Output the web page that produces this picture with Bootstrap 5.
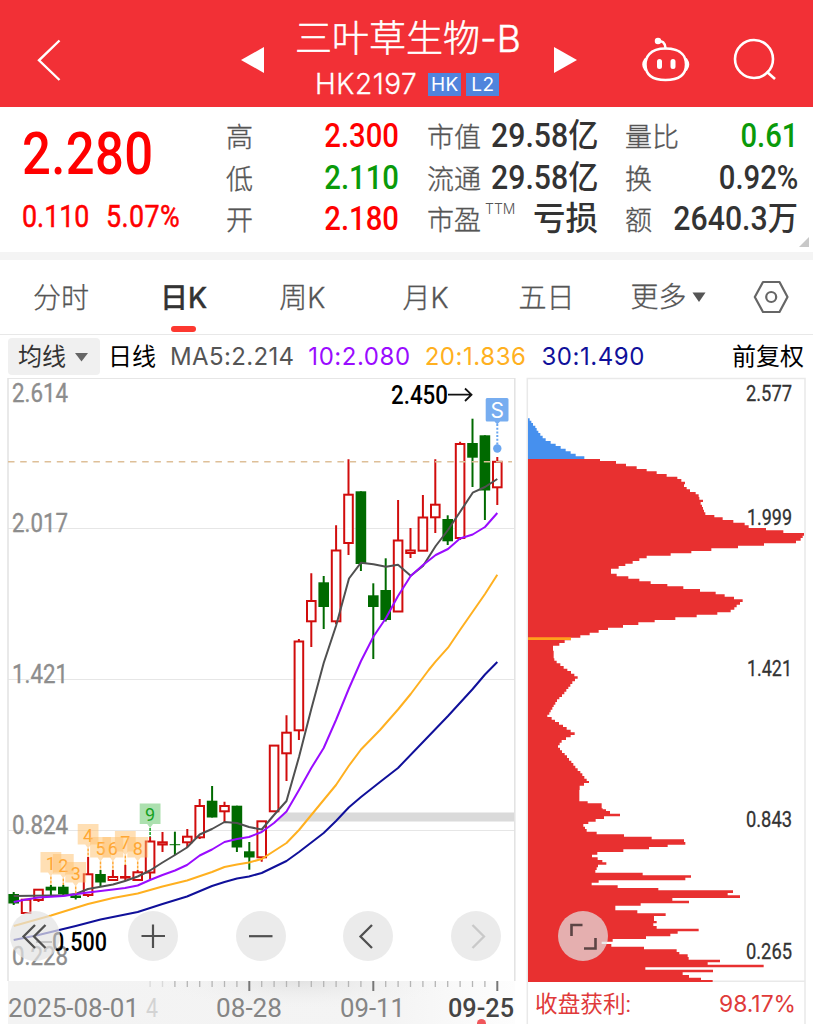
<!DOCTYPE html>
<html lang="zh-CN">
<head>
<meta charset="utf-8">
<meta name="viewport" content="width=device-width, initial-scale=1">
<title>三叶草生物-B</title>
<link href="https://cdn.jsdelivr.net/npm/bootstrap@5.3.0/dist/css/bootstrap.min.css" rel="stylesheet">
<style>
body{font-family:Inter,"Noto Sans CJK SC",sans-serif;color:#333;background:#fff;width:813px;height:1024px;overflow:hidden}
.topbar{height:107px;background:#f23036;color:#fff;padding:12px 37px 0 36px}
.topbar svg,.tabs svg{display:block;flex:none}
.stock{width:226px;margin:0 32px 0 30px;padding-top:4px}
.stock-name{font-size:37px;line-height:46px;font-weight:300;white-space:nowrap;-webkit-text-stroke:.5px #fff}
.stock-code{font-size:28px;line-height:44px;height:44px;font-weight:300;letter-spacing:.55px;padding-left:20px;-webkit-text-stroke:.3px #fff}
.tag{background:#5084dc;width:33px;height:23px;font-size:19px;line-height:23px;font-weight:400;text-align:center;letter-spacing:.3px;-webkit-text-stroke:0}
.quote{height:145px;padding:9px 16px 0 22px}
.num{font-family:Roboto,"Noto Sans CJK SC",sans-serif;font-weight:500;display:inline-block;white-space:nowrap}
.price{font-size:59px;line-height:71px;transform:scaleX(.86);transform-origin:left;color:#f00;letter-spacing:.5px}
.delta{font-size:30.5px;line-height:44px;transform:scaleX(.88);transform-origin:left;color:#f00;font-weight:400;-webkit-text-stroke:.5px #f00}
.main-price{width:204px;padding-top:2px}
.stat{height:41.7px;line-height:42px}
.stat .k{font-size:27px;font-weight:300;color:#555;position:relative;top:1px;-webkit-text-stroke:.35px #555}
.stat .k sup{font-size:14px;position:absolute;left:58px;top:-12px;line-height:42px;-webkit-text-stroke:0}
.stat .num{font-size:32.5px;transform:scaleX(.9);transform-origin:right;line-height:40px}
.stat .num.cj{transform:scaleX(.93)}
.stat .num.ks{transform:none}
.up{color:#f00}.down{color:#0a9a0a}
.c1{width:173px;margin-right:28px}.c2{width:171px;margin-right:27px}.c3{width:173px;margin-right:-1px}
.corner{right:4px;bottom:5px;width:10px;height:10px;background:#c8c8c8;clip-path:polygon(100% 0,100% 100%,0 100%)}
.band{height:8px;background:#f4f4f4}
.tabs{height:75px;border-bottom:1px solid #e8e8e8;font-size:28px;line-height:76px;font-weight:300;color:#555;padding:0 24px 0 33px;-webkit-text-stroke:.3px}
.tabs>span{white-space:nowrap}
.tabs .on{font-weight:500;color:#333}
.tabs .on::after{content:"";position:absolute;left:50%;margin-left:-13px;bottom:2px;width:25px;height:6px;border-radius:3px;background:#fd3830}
.mabar{height:42px;padding:1px 9px 0 8px;font-size:24px;line-height:42px;font-weight:400;white-space:nowrap}
.mabar .ma{letter-spacing:.55px}
.pick{background:#f0f0f0;border-radius:4px;height:37px;width:92px;line-height:36px;padding-left:10px;margin-right:8px;color:#333}
.charts{height:647px}
.charts svg{display:block;flex:none}
.rb{position:absolute;top:534px;width:50px;height:50px;border-radius:50%;background:rgba(227,227,227,.715);border:0;padding:0}
text{font-family:Roboto,"Noto Sans CJK SC",sans-serif}
</style>
</head>
<body>
<header class="topbar d-flex align-items-center">
  <svg width="28" height="46" viewBox="36 37 28 46" fill="none" stroke="#fff" stroke-width="2.4"><path d="M59.500 40.500 39 60.300 59.500 80"/></svg>
  <svg width="24" height="28" viewBox="241 45 24 28" style="margin-left:177px"><path d="M241 59 264 46V72Z" fill="#fff"/></svg>
  <div class="stock align-self-start">
    <div class="stock-name">三叶草生物-B</div>
    <div class="stock-code d-flex align-items-center">HK2197<span class="tag" style="margin-left:11px">HK</span><span class="tag" style="margin-left:5px">L2</span></div>
  </div>
  <svg width="24" height="28" viewBox="553 45 24 28"><path d="M554 46V72L577 59Z" fill="#fff"/></svg>
  <svg class="ms-auto" width="50" height="48" viewBox="640 36 50 48" fill="none" stroke="#fff" stroke-width="2.500" stroke-linecap="round"><path d="M665.500 48.500C683 48.500 686 58 686 64.500C686 72 682 80 665.500 80C649 80 645.500 72 645.500 64.500C645.500 58 649 48.500 665.500 48.500Z"/><path d="M645.500 59.500Q642 64.500 645.500 69.500M686 59.500Q689.500 64.500 686 69.500" stroke-width="3"/><path d="M657 41Q665 40 665.500 48"/><circle cx="658" cy="41" r="2" fill="#fff"/><path d="M659.500 61.500V66.500M673 61.500V66.500" stroke-width="5"/></svg>
  <svg style="margin-left:43px" width="43" height="46" viewBox="733 37 43 46" fill="none" stroke="#fff" stroke-width="2.600"><circle cx="754" cy="59" r="19"/><path d="M766.500 71.500 775 79"/></svg>
</header>

<section class="quote d-flex position-relative">
  <div class="main-price">
    <div><span class="num price">2.280</span></div>
    <div class="d-flex position-relative" style="margin-top:6px"><span class="num delta">0.110</span><span class="num delta" style="margin-left:7px;letter-spacing:.5px">5.07%</span></div>
  </div>
  <div class="c1">
    <div class="stat d-flex justify-content-between"><span class="k">高</span><span class="num up">2.300</span></div>
    <div class="stat d-flex justify-content-between"><span class="k">低</span><span class="num down">2.110</span></div>
    <div class="stat d-flex justify-content-between"><span class="k">开</span><span class="num up">2.180</span></div>
  </div>
  <div class="c2">
    <div class="stat d-flex justify-content-between"><span class="k">市值</span><span class="num cj">29.58亿</span></div>
    <div class="stat d-flex justify-content-between"><span class="k">流通</span><span class="num cj">29.58亿</span></div>
    <div class="stat d-flex justify-content-between"><span class="k">市盈<sup>TTM</sup></span><span class="num ks">亏损</span></div>
  </div>
  <div class="c3">
    <div class="stat d-flex justify-content-between"><span class="k">量比</span><span class="num down">0.61</span></div>
    <div class="stat d-flex justify-content-between"><span class="k">换</span><span class="num">0.92%</span></div>
    <div class="stat d-flex justify-content-between"><span class="k">额</span><span class="num cj">2640.3万</span></div>
  </div>
  <i class="corner position-absolute"></i>
</section>
<div class="band"></div>

<nav class="tabs d-flex">
  <span>分时</span><span class="on position-relative" style="margin-left:71px">日K</span><span style="margin-left:72px">周K</span><span style="margin-left:77px">月K</span><span style="margin-left:70px">五日</span>
  <span class="d-flex align-items-center" style="margin-left:56px">更多<svg style="margin-left:5px" width="14" height="12" viewBox="0 0 14 12"><path d="M.5 1.500H13.500L7 11Z" fill="#555"/></svg></span>
  <svg class="align-self-center ms-auto" width="36" height="34" viewBox="0 0 36 34" fill="none" stroke="#666" stroke-width="2.200"><path d="M10 2H26.500L34.500 17 26.500 32H10L1.800 17Z" stroke-linejoin="round"/><circle cx="18.200" cy="17" r="5"/></svg>
</nav>

<div class="mabar d-flex align-items-center">
  <div class="pick d-flex align-items-center">均线<svg class="ms-2" width="15" height="12" viewBox="0 0 15 12"><path d="M1 2H14L7.500 10.500Z" fill="#666"/></svg></div>
  <span class="text-black">日线</span>
  <span style="margin-left:14px;color:#555;letter-spacing:.35px">MA5:2.214</span>
  <span class="ma" style="margin-left:14px;color:#9a0cff">10:2.080</span>
  <span class="ma" style="margin-left:14px;color:#ffb020">20:1.836</span>
  <span class="ma" style="margin-left:15px;color:#10109a">30:1.490</span>
  <span class="ms-auto text-black">前复权</span>
</div>

<main class="charts d-flex position-relative">
  <svg width="520" height="647" viewBox="0 377 520 647" id="kline">
    <defs>
      <linearGradient id="ax" x1="0" x2="1"><stop offset="0" stop-color="#f3f3f3"/><stop offset=".75" stop-color="#f4f4f4"/><stop offset="1" stop-color="#fdfdfd"/></linearGradient>
      <radialGradient id="axv" cx=".5" cy="0" r="1" gradientTransform="translate(.25 0) scale(.5 1)"><stop offset="0" stop-color="#dedede" stop-opacity=".8"/><stop offset="1" stop-color="#f4f4f4" stop-opacity="0"/></radialGradient>
    </defs>
    <rect x="8" y="981" width="507" height="43" fill="url(#ax)"/>
    <rect x="150" y="981" width="300" height="30" fill="url(#axv)"/>
    <path d="M8 378.500H515M8 528.500H515M8 679.500H515M8 830.500H515" stroke="#e6e6e6" stroke-width="1.200"/>
    <path d="M8 378V981M514.800 378V981" stroke="#e2e2e2" stroke-width="1.500"/>
    <path d="M285 812.500H514V821.500H277Z" fill="#dadada"/>
    <g fill="#8d8d8d" stroke="#8d8d8d" stroke-width=".35" font-size="25" id="scale">
      <text x="12" y="402" textLength="56" lengthAdjust="spacingAndGlyphs">2.614</text>
      <text x="12" y="532" textLength="56" lengthAdjust="spacingAndGlyphs">2.017</text>
      <text x="12" y="683" textLength="56" lengthAdjust="spacingAndGlyphs">1.421</text>
      <text x="12" y="834" textLength="56" lengthAdjust="spacingAndGlyphs">0.824</text>
      <text x="12" y="965" textLength="56" lengthAdjust="spacingAndGlyphs">0.228</text>
    </g>
    <g id="candles"></g>
    <g id="averages" fill="none" stroke-width="2" stroke-linejoin="round"></g>
    <path d="M8 461.700H512" stroke="#debf98" stroke-width="1.400" stroke-dasharray="6.500 5.700"/>
    <g id="flags"></g>
    <text x="391" y="404" font-size="25" font-weight="500" fill="#000" textLength="57" lengthAdjust="spacingAndGlyphs">2.450</text>
    <path d="M448 394.700H471M465 388.500 471.500 394.700 465 401" fill="none" stroke="#111" stroke-width="1.800"/>
    <path d="M487 398H507Q508.500 398 508.500 399.500V420Q508.500 421.500 507 421.500H500L497.300 424.500 494.500 421.500H487Q485.700 421.500 485.700 420V399.500Q485.700 398 487 398Z" fill="#77adf0"/>
    <text x="497.300" y="418" font-size="21" fill="#fff" text-anchor="middle" style="font-family:Inter">S</text>
    <path d="M497.300 424V445" stroke="#6aa6f0" stroke-width="2" stroke-dasharray="2 1.700"/><circle cx="497.300" cy="448.500" r="4.200" fill="#6aa6f0"/>
    <path d="M36 942H52" stroke="#555" stroke-width="1.500"/>
    <text x="52" y="951" font-size="25" font-weight="500" fill="#000" textLength="55" lengthAdjust="spacingAndGlyphs">0.500</text>
    <g id="ticks"></g>
    <g font-size="26" fill="#858585">
      <text x="8" y="1017" textLength="131" lengthAdjust="spacingAndGlyphs">2025-08-01</text>
      <text x="146" y="1017" fill="#d3d3d3" textLength="12" lengthAdjust="spacingAndGlyphs">4</text>
      <text x="216" y="1017" textLength="66" lengthAdjust="spacingAndGlyphs">08-28</text>
      <text x="340" y="1017" textLength="65" lengthAdjust="spacingAndGlyphs">09-11</text>
      <text x="448" y="1017" fill="#444" font-weight="500" textLength="66" lengthAdjust="spacingAndGlyphs">09-25</text>
    </g>
    <circle cx="481.500" cy="1023.500" r="4.500" fill="#f0565a"/>
  </svg>
  <svg width="293" height="647" viewBox="520 377 293 647">
    <path d="M527.300 1024V378.500H805V1024M527 981.300H805" fill="none" stroke="#e9e9e9" stroke-width="1.500"/>
    <path id="chipUp" fill="#4690ee"/><path id="chipDown" fill="#e83030"/>
    <path d="M528 638.700H571" stroke="#ffa01c" stroke-width="2.800"/>
    <g font-size="22" fill="#333" font-weight="400" stroke="#333" stroke-width=".3">
      <text x="746" y="401" textLength="46" lengthAdjust="spacingAndGlyphs">2.577</text>
      <text x="747" y="525" textLength="45" lengthAdjust="spacingAndGlyphs">1.999</text>
      <text x="747" y="676" textLength="45" lengthAdjust="spacingAndGlyphs">1.421</text>
      <text x="746" y="827" textLength="46" lengthAdjust="spacingAndGlyphs">0.843</text>
      <text x="746" y="959" textLength="46" lengthAdjust="spacingAndGlyphs">0.265</text>
    </g>
    <text x="535" y="1012" font-size="22.500" fill="#e03a3a" textLength="96" lengthAdjust="spacingAndGlyphs">收盘获利:</text>
    <text x="719" y="1012" font-size="22.500" fill="#e03a3a" textLength="77" lengthAdjust="spacingAndGlyphs" style="font-family:Inter">98.17%</text>
  </svg>
  <button class="rb" style="left:10px" aria-label="最早"><svg width="50" height="50" fill="none" stroke="#505050" stroke-width="2.300"><path d="M25 14 13.500 25.500 25 37M35.500 14 24 25.500 35.500 37"/></svg></button>
  <button class="rb" style="left:128px" aria-label="放大"><svg width="50" height="50" stroke="#505050" stroke-width="2.200"><path d="M13.500 25H37M25 13.500V37"/></svg></button>
  <button class="rb" style="left:236px" aria-label="缩小"><svg width="50" height="50" stroke="#505050" stroke-width="2.200"><path d="M13 25.200H36.500"/></svg></button>
  <button class="rb" style="left:343px" aria-label="前移"><svg width="50" height="50" fill="none" stroke="#505050" stroke-width="2.300"><path d="M29 14 17.500 25.500 29 37"/></svg></button>
  <button class="rb" style="left:451px" aria-label="后移"><svg width="50" height="50" fill="none" stroke="#c9c9c9" stroke-width="2.300"><path d="M21.500 14 33 25.500 21.500 37"/></svg></button>
  <button class="rb" style="left:558px" aria-label="全屏"><svg width="50" height="50" fill="none" stroke="#5c4444" stroke-width="2.600"><path d="M13.500 25V14H24.500M37.500 27V37.500H26"/></svg></button>
</main>
<script src="https://cdn.jsdelivr.net/npm/bootstrap@5.3.0/dist/js/bootstrap.bundle.min.js"></script>
<script>
const X = i => 13.7 + 12.4 * i;
// direction, high, body top, body bottom, low
const candles = `g 892 894 903.5 905|r 899.7 899.7 913 913|r 889.7 889.7 900 902|g 885 886.7 890.5 895|g 885 886.7 894.3 895|g 894 895.5 898 899.5|r 857 874.3 895 897|g 870 874 882.5 886|r 870 877 880 880|r 865 877 877.6 881|r 870 872.3 880 880|r 837 841.5 872.5 879|r 832 842.3 844.5 852|g 831.7 844.2 845.2 855|r 829 836.7 842.3 847|r 799 806 837.3 839|g 786 800.7 817.5 817.5|r 801.7 806 811.3 823|g 805.7 805.7 847.5 852|g 842 851.3 857.5 869.7|r 821 821.3 857.3 861.7|r 745.3 745.6 811.3 811.3|r 715.3 732.7 753.3 781|r 639 641.5 730.3 740|r 573.3 601 621.3 647|g 576 582.3 607 629|r 525.3 550.5 621.3 624|r 459.3 494.7 543 555|g 491.3 491.3 564 571|g 583.3 595.3 607 659|g 558.3 590 620 621.5|r 500 540.5 611.5 611.5|r 528 550.5 553 558|r 495 517.5 550.7 550.7|r 459.3 504.7 517.3 533|g 515.3 519 541.3 545|r 441.7 444 538 540|g 418.7 443 457.7 487|g 435.3 435.3 490.5 520|r 457 461.8 487.3 505`;
let out = '';
candles.split('|').forEach((row, i) => {
  const [d, ...v] = row.split(' '), [h, t, b, l] = v.map(Number), x = X(i);
  if (d === 'g') out += `<path d="M${x} ${h}V${l}" stroke="#006a00" stroke-width="2"/><rect x="${x - 5.3}" y="${t}" width="10.6" height="${b - t}" fill="#006a00"/>`;
  else out += `<path d="M${x} ${h}V${t}M${x} ${b}V${l}" stroke="#d10d0d" stroke-width="2"/><rect x="${x - 4.3}" y="${t}" width="8.6" height="${b - t}" fill="#fff" stroke="#d10d0d" stroke-width="2"/>`;
});
document.getElementById('candles').innerHTML = out;

const averages = {
  '#10109a': '13.7,940 38.5,935 75.7,926 100.5,919.5 137.7,912 162.5,904 187,896.5 212,886 224.5,882 237,878.5 249,876.5 261.7,873 286.5,861 299,852 323.7,833 336,821 348.7,807.5 361,797 380,782 398,768 423,742 448,716 472.7,689 485,674.5 497.3,662',
  '#ffb020': '13.7,926 51,915.5 88,904 113,898 137.7,893.5 162.5,886.5 187,880.5 212,872 224.5,867 237,864.5 249,862.5 261.7,859 286.5,843 299,830 311.3,815 336,785 348.7,766 361,749.5 380,730 398,709.5 410.7,694 428.7,670 435.5,661.7 448,647.7 460,630 485,594 497.3,574.7',
  '#505050': '13.700,896 51,895.5 63,895.5 75.7,894 88,889 100.5,886.7 113,884.5 125,881 137.7,876.5 150,870.5 162.5,862.5 175,855 187,847.5 199.7,834.5 212,829 224.5,822 237,823 249,827 261.7,829.5 274,815 286.5,801 299,757 311.3,709 323.7,663 336,626 349,578.5 361,562.7 373.5,564.3 386,566.7 398,564.7 410.7,575.7 423,566 435.7,546 448,530 460,512 472.7,492.7 485,487 497.3,479',
  '#9a0cff': '13.7,902 26,899.5 38.5,897.5 63,896 88,892.5 113,889.5 125,888 137.7,885.5 150,880 162.5,875 175,870.5 187,865 199.7,855.5 212,849.5 224.5,842 237,839 249,837 261.7,832 274,823 286.5,811.5 299,790 311.3,768 323.7,748 336,720 348.7,689 361,661 373.5,636.5 386,618 398,596 410.7,576 423,565 435.7,555 448,549 460,538.5 472.7,534.5 485,527 497.3,513'
};
document.getElementById('averages').innerHTML = Object.entries(averages).map(([c, p]) => `<polyline points="${p}" stroke="${c}"/>`).join('');

// sequence markers: number, candle index, flag top, end of dotted stem
const flags = [[1,3,852,885],[2,4,854,885],[3,5,862,894],[4,6,824,857],[5,7,837,870],[6,8,837,870],[7,9,831,865],[8,10,837,870],[9,11,803.5,837]];
document.getElementById('flags').innerHTML = flags.map(([n, i, y, e]) => {
  const x = X(i), g = n === 9, c = g ? '#16a022' : '#ffa733';
  return `<path d="M${x - 10.4} ${y}h20.800v20.500h-7.500l-2.900 4-2.900-4h-7.500z" fill="${g ? '#74cb7a' : '#ffc069'}" opacity="${g ? .6 : .5}"/>` +
    `<path d="M${x} ${y + 24.500}V${e}" stroke="${c}" stroke-width="1.500" stroke-dasharray="3 1"/>` +
    `<text x="${x}" y="${y + 17.5}" font-size="18" text-anchor="middle" fill="${c}">${n}</text>`;
}).join('');

let ticks = '';
for (let i = 11; i < 40; i++) {
  const major = [19, 29, 39].includes(i);
  ticks += `<path d="M${X(i)} 981v${major ? 10 : 6}" stroke="${major ? '#777' : '#b5b5b5'}" stroke-width="${major ? 2 : 1.3}" opacity="${i < 13 ? .4 : 1}"/>`;
}
document.getElementById('ticks').innerHTML = ticks;

// chip distribution: start-of-row : width, in thirds of a pixel from the panel's origin
const steps = (base, s) => s.split(' ').map(p => { const [y, x] = p.split(':'); return [base + y / 3, 520 + x / 3]; });
const outline = (list, end) => `M528 ${list[0][0]}` + list.map(([y, x]) => `V${y}H${x}`).join('') + `V${end}H528Z`;
const above = steps(400, '55:29 62:34 69:39 77:46 84:50 92:55 99:61 107:68 115:77 123:92 131:107 138:122 146:137 154:152 161:167 169:193');
const below = steps(400, '177:240 183:288 191:318 199:350 207:380 214:410 222:440 230:472 237:484 245:495 253:492 261:500 268:510 276:527 283:536 291:538 299:549 306:542 314:546 321:549 329:552 337:556 345:583 352:608 360:640 368:674 376:686 384:738 391:790 399:852 407:848 414:842 422:828 430:732 437:654 445:574 453:514 460:452 467:380 475:358 483:338 491:316 498:296 506:273 521:290 529:325 536:358 544:392 552:442 559:490 567:540')
  .concat(steps(590, '5:587 13:614 20:642 28:668 36:660 44:650 52:643 59:632 67:592 74:530 82:466 90:404 97:355 105:309 113:264 120:236 128:209 136:181 143:153 151:134 159:118 167:99 182:101 205:103 212:110 220:121 228:131 236:142 243:153 251:163 259:173 266:165 274:157 282:151 290:145 297:139 305:133 313:126 321:118 328:111 336:106 344:101 351:97 359:92 367:88 374:82 381:95 389:105 396:117 404:129 411:140 419:152 427:164 435:152 442:138 450:125 458:119 466:114 473:120 481:126 489:134 496:141 504:147 512:154 519:160 527:166 535:173 543:181 550:187 558:193 566:200'))
  .concat(steps(780, '3:207 9:192 17:179 30:178 64:203 70:245 85:248 88:258 93:270 101:300 109:252 117:227 125:205 132:190 140:195 147:200 155:230 163:312 170:395 178:492 186:496 194:443 201:387 208:310 216:232 224:216 232:233 240:247 247:259 254:234 262:230 270:226 278:368 286:513 293:496 301:236 308:215 316:293 324:415 331:639 339:623 346:660 354:457 362:507 370:362 377:286 391:352 400:437 408:402 423:410 430:400 438:410 446:536 454:473 461:451 469:378 477:278 485:245 492:274 500:372 508:470 516:478 523:503 531:506 539:600 547:563 554:731 562:376 569:579 577:488 585:507 593:543 600:578'));
document.getElementById('chipUp').setAttribute('d', outline(above, 459));
document.getElementById('chipDown').setAttribute('d', outline(below, 982));
</script>
</body>
</html>
